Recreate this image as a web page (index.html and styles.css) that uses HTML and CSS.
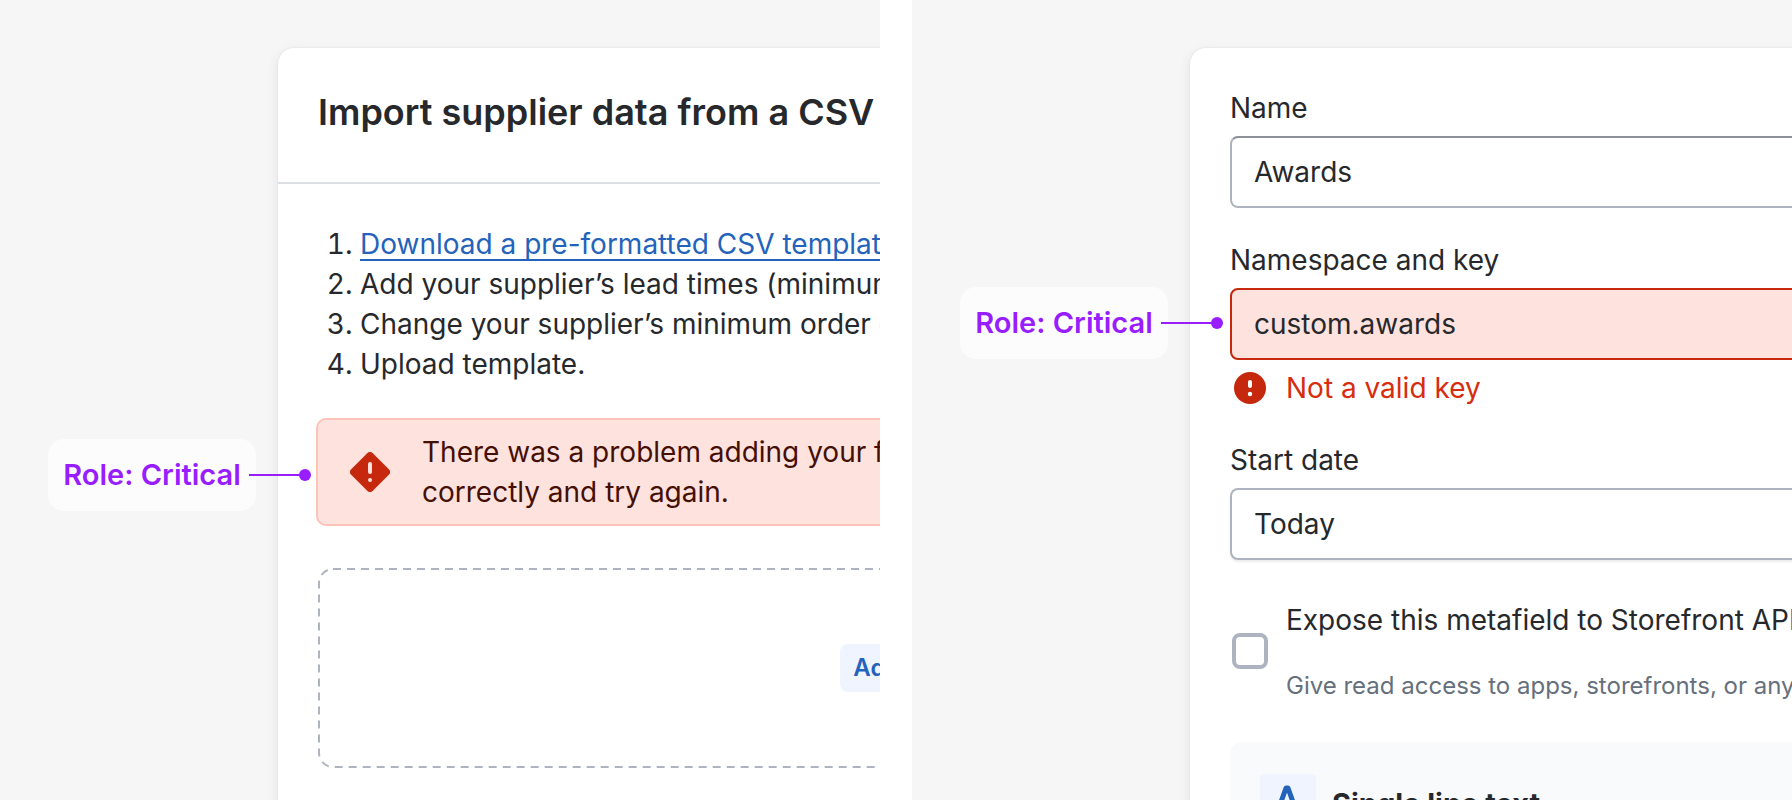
FILE: index.html
```html
<!DOCTYPE html>
<html lang="en">
<head>
<meta charset="utf-8">
<meta name="viewport" content="width=device-width, initial-scale=1">
<title>Role: Critical</title>
<link rel="stylesheet" href="styles.css">
</head>
<body>
<main class="examples">
  <section class="pane">
    <div class="card card-import">
      <header class="card-header">
        <h1 class="title">Import supplier data from a CSV</h1>
      </header>
      <div class="card-body">
        <ol class="steps">
          <li><a class="link" href="#template">Download a pre-formatted CSV template</a></li>
          <li>Add your supplier’s lead times (minimum</li>
          <li>Change your supplier’s minimum order quantity</li>
          <li>Upload template.</li>
        </ol>
        <div class="banner" role="alert">
          <div class="callout callout-banner"><span class="callout-label">Role: Critical</span><span class="callout-line"></span></div>
          <svg class="banner-icon" viewBox="0 0 40 40" aria-hidden="true">
            <path fill="#c5280c" d="M17.2 1.2a4 4 0 0 1 5.6 0l16 16a4 4 0 0 1 0 5.6l-16 16a4 4 0 0 1-5.6 0l-16-16a4 4 0 0 1 0-5.6z"/>
            <path stroke="#fee2dd" stroke-width="4" stroke-linecap="round" d="M20 12v8"/>
            <circle cx="20" cy="28" r="2" fill="#fee2dd"/>
          </svg>
          <p class="banner-text">There was a problem adding your file.<br>correctly and try again.</p>
        </div>
        <div class="dropzone">
          <svg class="dropzone-outline" aria-hidden="true"><rect class="dropzone-rect" x="1" y="1" rx="14"/></svg>
          <button class="add-button" type="button">Add file</button>
        </div>
      </div>
    </div>
  </section>
  <section class="pane">
    <form class="card card-form">
      <div class="field">
        <label for="name">Name</label>
        <input class="control control-name" id="name" type="text" value="Awards">
      </div>
      <div class="field">
        <label for="key">Namespace and key</label>
        <div class="control-wrap">
          <div class="callout callout-field"><span class="callout-label">Role: Critical</span><span class="callout-line"></span></div>
          <input class="control control-error" id="key" type="text" value="custom.awards" aria-invalid="true" aria-describedby="key-error">
        </div>
        <p class="error" id="key-error">
          <svg class="error-icon" viewBox="0 0 40 40" aria-hidden="true">
            <circle cx="20" cy="20" r="16" fill="#c5280c"/>
            <path stroke="#fff" stroke-width="4" stroke-linecap="round" d="M20 14v4"/>
            <circle cx="20" cy="26" r="2.2" fill="#fff"/>
          </svg>
          <span>Not a valid key</span>
        </p>
      </div>
      <div class="field">
        <label for="start">Start date</label>
        <select class="control control-select" id="start"><option>Today</option></select>
      </div>
      <div class="choice">
        <input class="checkbox" id="expose" type="checkbox" aria-describedby="expose-help">
        <div class="choice-text">
          <label for="expose">Expose this metafield to Storefront API</label>
          <p class="help" id="expose-help">Give read access to apps, storefronts, or anything</p>
        </div>
      </div>
      <div class="type-panel">
        <span class="type-icon">
          <svg viewBox="0 0 56 56" aria-hidden="true"><path fill="none" stroke="#2463bc" stroke-width="5" stroke-linecap="round" stroke-linejoin="round" d="M16 42 26 14h2l10 28M20 33h14"/></svg>
        </span>
        <strong class="type-name">Single line text</strong>
      </div>
    </form>
  </section>
</main>
</body>
</html>
```

FILE: styles.css
```css
* {
  box-sizing: border-box;
}

body {
  margin: 0;
  overflow: hidden;
  background: #fff;
  color: #26282c;
  font-family: Inter, "Liberation Sans", sans-serif;
  font-size: 28px;
  line-height: 40px;
  white-space: nowrap;
}

h1,
p,
ol {
  margin: 0;
  padding: 0;
}

.examples {
  display: grid;
  grid-template-columns: minmax(0, 1fr) minmax(0, 1fr);
  gap: 32px;
  height: 100vh;
}

.pane {
  overflow: hidden;
  padding: 48px 0 0 278px;
  background: #f6f6f6;
}

.card {
  width: 1240px;
  border-radius: 16px;
  background: #fff;
  box-shadow: 0 0 2px rgba(0, 0, 0, 0.1), 0 4px 14px rgba(0, 0, 0, 0.08);
}

.card-header {
  padding: 40px 40px 46px;
  border-bottom: 2px solid #dce0e4;
}

.title {
  font-size: 36px;
  font-weight: 600;
  line-height: 48px;
}

.card-body {
  padding: 40px 40px 80px;
}

.steps {
  padding-left: 42px;
}

.link {
  color: #2463bc;
  text-decoration: underline;
  text-decoration-thickness: 2px;
  text-underline-offset: 5px;
  text-decoration-skip-ink: none;
}

.banner {
  position: relative;
  display: flex;
  align-items: center;
  gap: 32px;
  margin-top: 36px;
  padding: 12px 32px;
  border-radius: 8px;
  background: #fee2dd;
  box-shadow: 0 0 0 2px #fdc3b9;
  color: #450f04;
}

.banner-icon {
  flex: none;
  width: 40px;
  height: 40px;
}

.dropzone {
  position: relative;
  display: flex;
  align-items: center;
  justify-content: center;
  height: 200px;
  margin-top: 44px;
}

.dropzone-outline {
  position: absolute;
  inset: 0;
  width: 100%;
  height: 100%;
}

.dropzone-rect {
  width: calc(100% - 2px);
  height: calc(100% - 2px);
  fill: none;
  stroke: #aeb4bf;
  stroke-width: 2px;
  stroke-dasharray: 8 6;
}

.add-button {
  position: relative;
  height: 48px;
  padding: 0 13px;
  border: 0;
  border-radius: 8px;
  background: #f0f4fe;
  color: #2463bc;
  font: 600 24px/32px Inter, "Liberation Sans", sans-serif;
}

.callout {
  position: absolute;
  right: 100%;
  top: 50%;
  display: flex;
  align-items: center;
  width: 268px;
  height: 72px;
  color: #991eff;
  font-size: 29px;
  font-weight: 600;
  transform: translateY(-50%);
}

.callout-banner {
  margin: 3px 2px 0 0;
}

.callout-field {
  margin-top: -1px;
  margin-right: 2px;
}

.callout-label {
  width: 208px;
  padding: 16px 0;
  border-radius: 16px;
  background: #fcfcfc;
  text-align: center;
}

.callout-line {
  position: relative;
  width: 56px;
  height: 2px;
  margin-left: -7px;
  background: #991eff;
}

.callout-line::after {
  content: "";
  position: absolute;
  right: -6px;
  top: -5px;
  width: 12px;
  height: 12px;
  border-radius: 50%;
  background: #991eff;
}

.card-form {
  display: flex;
  flex-direction: column;
  gap: 32px;
  padding: 40px;
}

.field {
  display: flex;
  flex-direction: column;
}

.control {
  appearance: none;
  width: 100%;
  height: 72px;
  margin: 8px 0 0;
  padding: 0 22px;
  border: 2px solid #aeb4bf;
  border-radius: 8px;
  background: #fff;
  color: inherit;
  font: inherit;
}

.control-name {
  border-top-color: #8c9098;
}

.control-wrap {
  position: relative;
  margin-top: 8px;
}

.control-error {
  display: block;
  margin: 0;
  border-color: #c5280c;
  background: #fee2dd;
}

.control-select {
  box-shadow: 0 2px 2px rgba(0, 0, 0, 0.08);
}

.error {
  display: flex;
  align-items: center;
  gap: 16px;
  margin-top: 8px;
  color: #d72c0d;
}

.error-icon {
  width: 40px;
  height: 40px;
}

.choice {
  display: flex;
  align-items: center;
  gap: 18px;
  margin-top: 8px;
  padding-left: 2px;
}

.checkbox {
  appearance: none;
  flex: none;
  width: 36px;
  height: 36px;
  margin: 0;
  border: 4px solid #aeb4bf;
  border-radius: 8px;
}

.choice-text {
  display: grid;
  gap: 30px;
}

.help {
  color: #65707c;
  font-size: 24px;
  line-height: 32px;
}

.type-panel {
  display: flex;
  align-items: center;
  gap: 16px;
  margin-top: 8px;
  padding: 32px 30px;
  border-radius: 12px;
  background: #f9fafc;
}

.type-icon {
  width: 56px;
  height: 56px;
  border-radius: 4px;
  background: #f0f4fe;
}

.type-name {
  padding-top: 4px;
  font-size: 29px;
  font-weight: 700;
}
```
